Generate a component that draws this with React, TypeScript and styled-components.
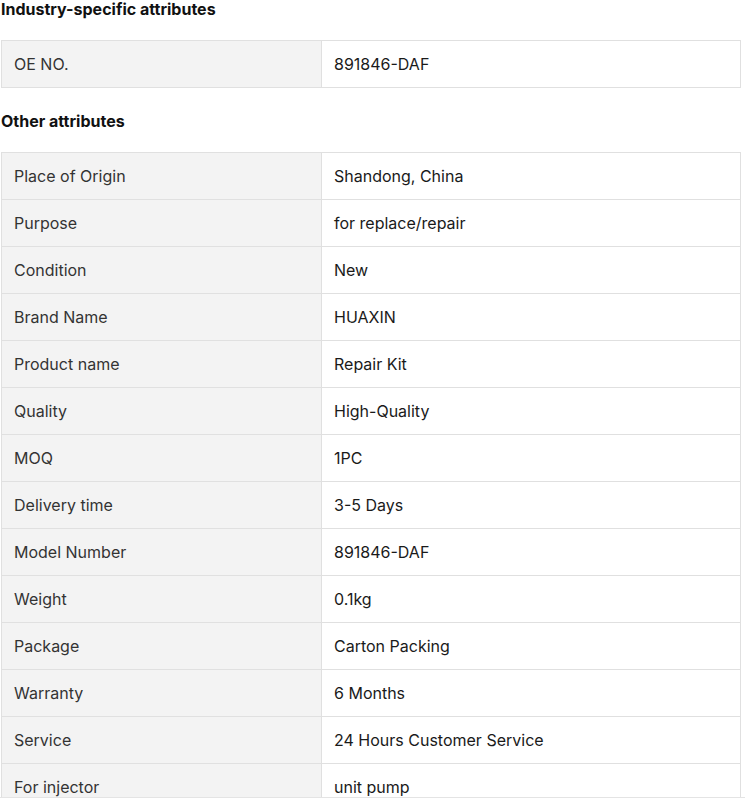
import React from "react";
import styled, { createGlobalStyle } from "styled-components";

const Global = createGlobalStyle`
  html, body { margin: 0; padding: 0; background: #fff; }
  body { font-family: Inter, "Noto Sans", sans-serif; color: #222; }
  *, *::before, *::after { box-sizing: border-box; }
`;

const Page = styled.div`
  padding: 0 4px 0 1px;
  height: 798px;
  overflow: hidden;
  border-bottom: 1px solid #e4e4e4;
`;

const Heading = styled.h3`
  margin: 0;
  font-size: 16px;
  font-weight: 700;
  line-height: 18px;
  color: #111;
  padding: 0 0 22px 0;
`;

const Table = styled.table`
  width: 740px;
  border-collapse: collapse;
  margin-bottom: 24px;
  table-layout: fixed;
`;

const LabelCol = styled.col`
  width: 320px;
`;

const Row = styled.tr`
  height: 47px;
`;

const Cell = styled.td<{ $label?: boolean }>`
  border: 1px solid #e0e0e0;
  padding: 0 12px;
  font-size: 16px;
  line-height: 20px;
  vertical-align: middle;
  background: ${(p) => (p.$label ? "#f3f3f3" : "#fff")};
  color: ${(p) => (p.$label ? "#333" : "#1a1a1a")};
`;

const industry: [string, string][] = [["OE NO.", "891846-DAF"]];
const other: [string, string][] = [
  ["Place of Origin", "Shandong, China"],
  ["Purpose", "for replace/repair"],
  ["Condition", "New"],
  ["Brand Name", "HUAXIN"],
  ["Product name", "Repair Kit"],
  ["Quality", "High-Quality"],
  ["MOQ", "1PC"],
  ["Delivery time", "3-5 Days"],
  ["Model Number", "891846-DAF"],
  ["Weight", "0.1kg"],
  ["Package", "Carton Packing"],
  ["Warranty", "6 Months"],
  ["Service", "24 Hours Customer Service"],
  ["For injector", "unit pump"],
];

const AttrTable = ({ rows }: { rows: [string, string][] }) => (
  <Table>
    <colgroup>
      <LabelCol />
      <col />
    </colgroup>
    <tbody>
      {rows.map(([k, v]) => (
        <Row key={k}>
          <Cell $label>{k}</Cell>
          <Cell>{v}</Cell>
        </Row>
      ))}
    </tbody>
  </Table>
);

export default function App() {
  return (
    <>
      <Global />
      <Page>
        <Heading>Industry-specific attributes</Heading>
        <AttrTable rows={industry} />
        <Heading>Other attributes</Heading>
        <AttrTable rows={other} />
      </Page>
    </>
  );
}
